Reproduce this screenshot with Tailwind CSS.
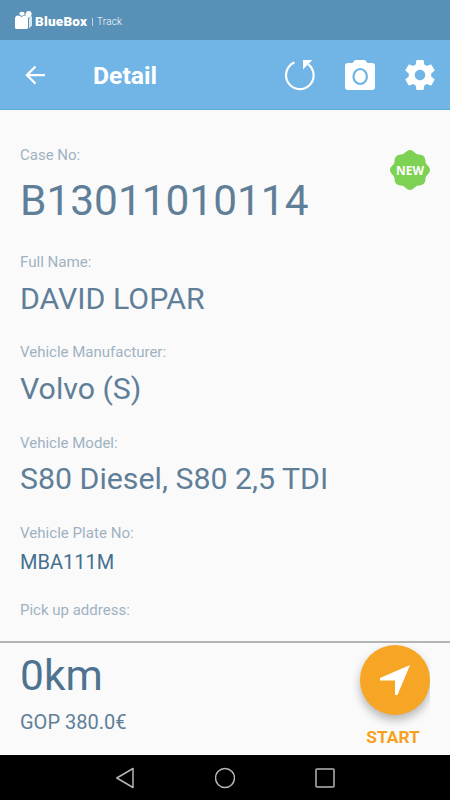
<!DOCTYPE html>
<html lang="en">
<head>
<meta charset="utf-8">
<title>BlueBox Track</title>
<script src="https://cdn.jsdelivr.net/npm/@tailwindcss/browser@4"></script>
</head>
<body class="w-[450px] h-[800px] overflow-hidden bg-[#fafafa] font-[Roboto,sans-serif] text-[#5f7f99] flex flex-col">
<div class="h-10 shrink-0 bg-[#5890b8] flex items-start pl-[15px] pt-[10px] text-white">
  <svg class="w-[18px] h-5 shrink-0" viewBox="0 0 18 20" fill="#fff">
    <path d="M0 9Q0 5.500 3 5.500Q5.500 5.500 6.500 7.200Q7.500 5.500 10 5.500Q13 5.500 13 9V17.500Q13 19 11.500 19H1.500Q0 19 0 17.500Z"/>
    <path d="M14 9Q14.500 5.500 17 6.500V15.500L14 18.500Z" fill="#dce9f3"/>
    <ellipse cx="7" cy="3.600" rx="2.600" ry="1.900"/><path d="M4.500 4.500H8.500L7 6Z"/><circle cx="13.700" cy="3.800" r="2.900"/><path d="M9 4.500H12L16 6L13.200 8Q12 5 9 4.500Z"/>
  </svg>
  <span class="ml-[2px] mt-[3px] text-[13.5px] leading-4 font-black tracking-[0.25px] w-[55px] whitespace-nowrap">BlueBox</span>
  <span class="mt-[8px] w-px h-[8px] bg-white/60 ml-[2px]"></span>
  <span class="ml-[4px] mt-[4px] text-[10px] leading-4 font-light tracking-[0.2px]">Track</span>
</div>
<div class="h-[70px] shrink-0 bg-[#70b5e5] border-b border-[#5aaddb] flex items-center text-white">
  <svg class="ml-5 w-[30px] h-[30px]" viewBox="0 0 24 24" fill="#fff"><path d="M20 11.100H7.700l5.300-5.300L11.800 4.500l-7.600 7.500 7.600 7.500 1.200-1.300L7.700 12.900H20z"/></svg>
  <span class="ml-[43px] w-[187px] mt-[3px] text-[24.7px] leading-[30px] font-bold">Detail</span>
  <svg class="ml-[2px] w-[36px] h-[36px]" viewBox="0 0 36 36" fill="none"><path d="M12.400 5.600A13.800 13.800 0 1 0 26.300 7.400" stroke="#fff" stroke-width="2.200"/><path d="M21 3H30.300L21 12.400Z" fill="#fff"/></svg>
  <svg class="ml-[25px] w-[34px] h-[36px]" viewBox="0 0 34 36"><path fill="#fff" d="M5 6H9.500L12 3H22L24.500 6H29Q32 6 32 9V30Q32 33 29 33H5Q2 33 2 30V9Q2 6 5 6Z"/><ellipse cx="17.200" cy="19.500" rx="6.700" ry="7.500" fill="none" stroke="#70b5e5" stroke-width="2.200"/></svg>
  <svg class="ml-[25px] w-[36px] h-[36px]" viewBox="0 0 24 24" fill="#fff"><path d="M19.430 12.980c.040-.320.070-.640.070-.980s-.030-.660-.070-.980l2.110-1.650c.190-.150.240-.420.120-.640l-2-3.460c-.120-.220-.390-.300-.610-.220l-2.490 1c-.520-.400-1.080-.730-1.690-.980l-.380-2.650C14.460 2.180 14.250 2 14 2h-4c-.250 0-.460.180-.490.420l-.380 2.650c-.610.250-1.170.590-1.690.980l-2.490-1c-.230-.090-.490 0-.610.220l-2 3.460c-.130.220-.070.490.120.640l2.110 1.650c-.040.320-.070.650-.070.980s.030.660.070.980l-2.110 1.650c-.190.150-.240.420-.120.640l2 3.460c.120.220.390.300.610.220l2.490-1c.520.400 1.080.730 1.690.980l.380 2.650c.030.240.240.420.490.420h4c.250 0 .460-.180.490-.420l.380-2.650c.610-.250 1.170-.590 1.690-.980l2.490 1c.230.090.490 0 .610-.220l2-3.460c.120-.220.070-.490-.120-.640l-2.110-1.650zM12 15.500c-1.930 0-3.500-1.570-3.500-3.500s1.570-3.500 3.500-3.500 3.500 1.570 3.500 3.500-1.570 3.500-3.500 3.500z"/></svg>
</div>
<main class="h-[531px] shrink-0 overflow-hidden px-5 pt-[36px] flex justify-between whitespace-nowrap">
  <div class="flex flex-col">
    <p class="text-[15px] leading-[18px] text-[#9fb2c2]">Case No:</p>
    <p class="mt-3 text-[42.4px] leading-[50px]">B13011010114</p>
    <p class="mt-[27px] text-[15.1px] leading-[18px] text-[#9fb2c2]">Full Name:</p>
    <p class="mt-[10px] text-[30.3px] leading-9">DAVID LOPAR</p>
    <p class="mt-[26px] text-[15px] leading-[18px] text-[#9fb2c2]">Vehicle Manufacturer:</p>
    <p class="mt-[10px] text-[30.3px] leading-9">Volvo (S)</p>
    <p class="mt-[27px] text-[15px] leading-[18px] text-[#9fb2c2]">Vehicle Model:</p>
    <p class="mt-[9px] text-[30.3px] leading-9">S80 Diesel, S80 2,5 TDI</p>
    <p class="mt-[27px] text-[15.1px] leading-[18px] text-[#9fb2c2]">Vehicle Plate No:</p>
    <p class="mt-2 text-[20px] leading-6 text-[#44708f]">MBA111M</p>
    <p class="mt-[27px] text-[15px] leading-[18px] text-[#9fb2c2]">Pick up address:</p>
  </div>
  <svg class="mt-[4px] w-10 h-10 shrink-0" viewBox="0 0 40 40"><path fill="#7dd153" d="M20 0C24 0 25 4.500 28.500 4.500C33 4.500 35.500 7 35.500 11.500C35.500 15 40 16 40 20C40 24 35.500 25 35.500 28.500C35.500 33 33 35.500 28.500 35.500C25 35.500 24 40 20 40C16 40 15 35.500 11.500 35.500C7 35.500 4.500 33 4.500 28.500C4.500 25 0 24 0 20C0 16 4.500 15 4.500 11.500C4.500 7 7 4.500 11.500 4.500C15 4.500 16 0 20 0Z"/><text x="20" y="25" text-anchor="middle" fill="#fff" font-family="Open Sans" font-weight="700" font-size="12.500" textLength="28" lengthAdjust="spacingAndGlyphs">NEW</text></svg>
</main>
<div class="h-[114px] shrink-0 border-t-2 border-[#b4b4b4] pl-5 pr-5 flex justify-between text-[#4e7390]">
  <div class="pt-[8px]">
    <p class="text-[42.5px] leading-[50px]">0km</p>
    <p class="mt-[9px] text-[20px] leading-6 text-[#5f7f99]">GOP 380.0€</p>
  </div>
  <div class="w-[90px] pl-5 pt-[2px] flex flex-col items-center overflow-hidden">
    <div class="w-[70px] h-[70px] shrink-0 rounded-full bg-[#f6a524] shadow-[0_5px_10px_rgba(0,0,0,0.28)]">
      <svg class="w-[70px] h-[70px]" viewBox="0 0 70 70"><path fill="#fff" d="M50 20L37.500 50H35V35.500H20V33Z"/></svg>
    </div>
    <p class="-ml-[4px] mt-[12px] text-[17.3px] leading-5 font-bold text-[#f6a11c]">START</p>
  </div>
</div>
<nav class="h-[45px] shrink-0 bg-black flex justify-center items-center gap-[80px]">
  <svg class="w-5 h-[22px]" viewBox="0 0 20 22" fill="none" stroke="#b5b5b5" stroke-width="1.500"><path d="M18 1.500V20.500L1.800 11Z" stroke-linejoin="round"/></svg>
  <svg class="w-5 h-[22px]" viewBox="0 0 20 22" fill="none" stroke="#b5b5b5" stroke-width="1.500"><circle cx="10" cy="11" r="9.500"/></svg>
  <svg class="w-5 h-[22px]" viewBox="0 0 20 22" fill="none" stroke="#b5b5b5" stroke-width="1.500"><rect x="1" y="2" width="18" height="18" rx="1"/></svg>
</nav>
</body>
</html>
